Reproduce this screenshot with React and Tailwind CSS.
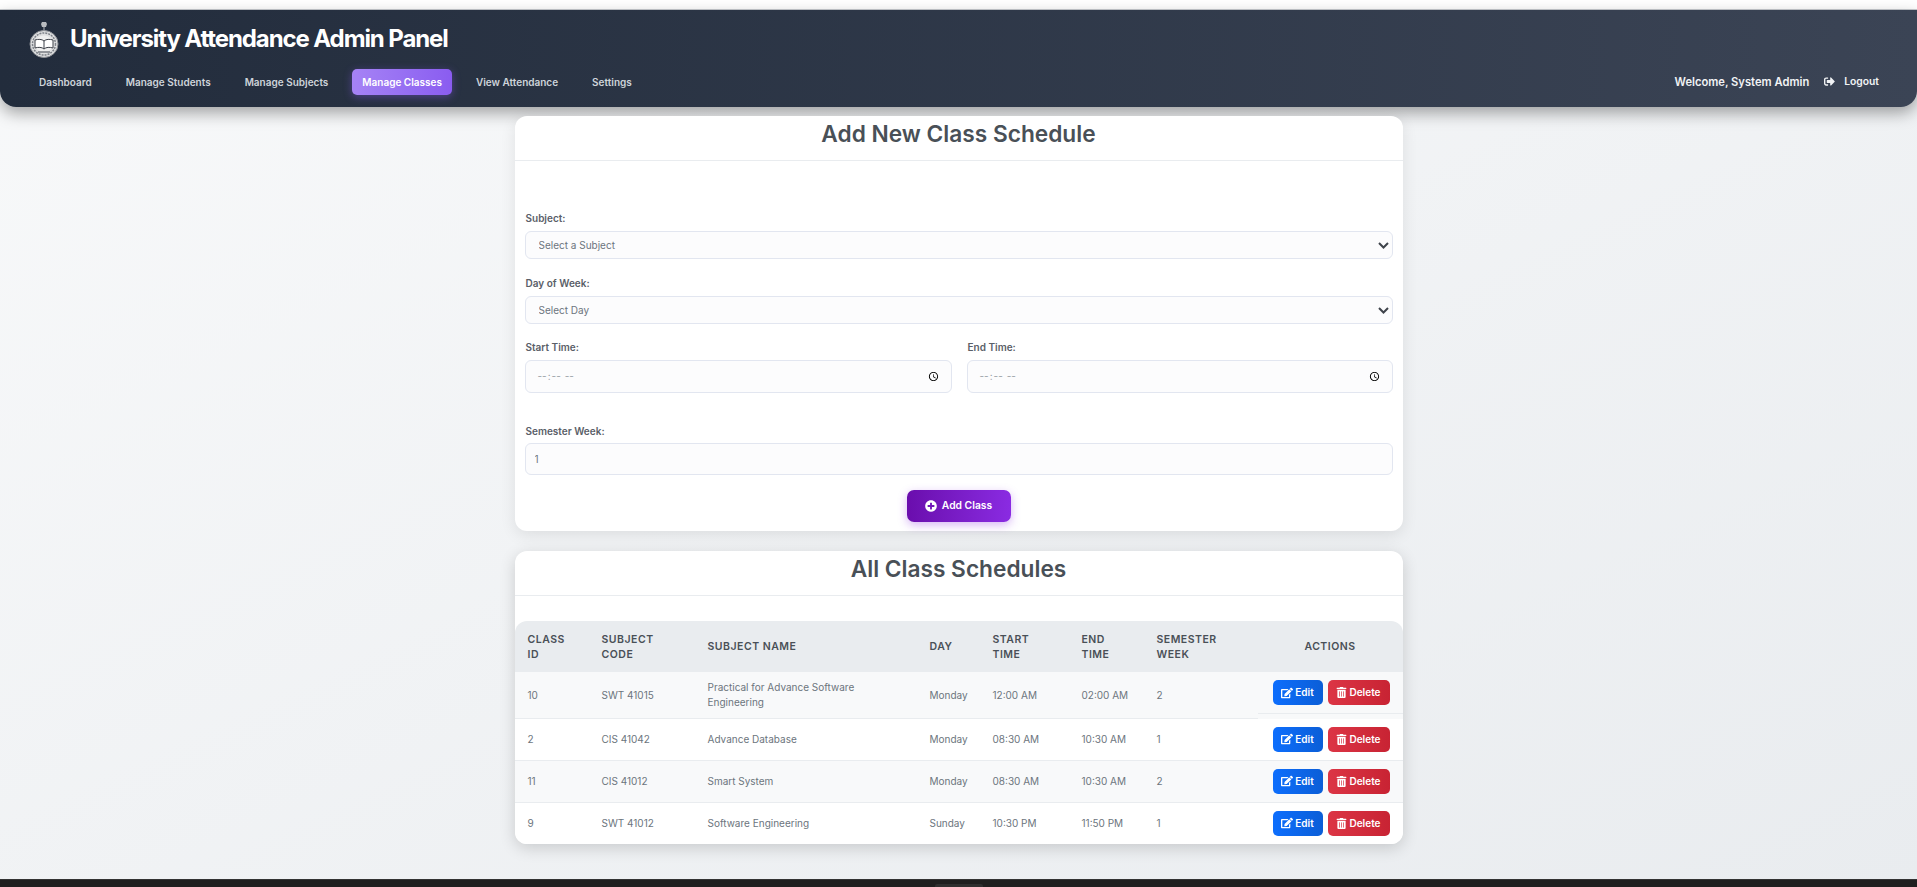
import { FaSignOutAlt, FaPlusCircle, FaEdit, FaTrashAlt } from "react-icons/fa";

const navItems = ["Dashboard", "Manage Students", "Manage Subjects", "Manage Classes", "View Attendance", "Settings"];

const rows = [
  { id: 10, code: "SWT 41015", name: "Practical for Advance Software Engineering", day: "Monday", start: "12:00 AM", end: "02:00 AM", week: 2 },
  { id: 2, code: "CIS 41042", name: "Advance Database", day: "Monday", start: "08:30 AM", end: "10:30 AM", week: 1 },
  { id: 11, code: "CIS 41012", name: "Smart System", day: "Monday", start: "08:30 AM", end: "10:30 AM", week: 2 },
  { id: 9, code: "SWT 41012", name: "Software Engineering", day: "Sunday", start: "10:30 PM", end: "11:50 PM", week: 1 },
];

const fieldClass =
  "block w-full rounded-[6px] border border-[#e2e6f0] bg-[#fcfcfd] text-[10px] text-[#6c757d] outline-none";
const labelClass = "block pl-[1px] text-[10px] leading-[14px] font-semibold text-[#5a6068]";
const thClass = "px-[13px] text-[10.5px] leading-[15px] font-semibold tracking-[0.5px] text-[#495057] uppercase";
const tdClass = "px-[13px] py-[8px] text-[10px] leading-[15px] text-[#6c757d] border-b border-[#e9ecef]";

function Logo() {
  return (
    <svg width="30" height="37" viewBox="0 0 30 37" className="shrink-0">
      <path d="M13 1h4l1 2-1 3h-4l-1-3z" fill="#b9bcc0" />
      <path d="M15 5v5" stroke="#b9bcc0" strokeWidth="1" />
      <ellipse cx="15" cy="23" rx="14" ry="13.5" fill="#dfe0e1" stroke="#8d9096" strokeWidth="1" />
      <ellipse cx="15" cy="23" rx="11.5" ry="11" fill="none" stroke="#7d8188" strokeWidth="1.5" strokeDasharray="2 1" />
      <ellipse cx="15" cy="23" rx="9" ry="8.5" fill="#efefef" />
      <path d="M6 19c3-1 7-1 9 1 2-2 6-2 9-1v8c-3-1-7-1-9 1-2-2-6-2-9-1z" fill="#fff" stroke="#3c4048" strokeWidth="1" />
      <path d="M15 20v8" stroke="#3c4048" strokeWidth="1" />
      <path d="M9 31h12" stroke="#777b82" strokeWidth="1.5" />
    </svg>
  );
}

function Header() {
  return (
    <header className="h-[97px] shrink-0 rounded-b-[16px] bg-gradient-to-r from-[#222c3c] to-[#3b4455] pl-[29px] pr-[38px] shadow-[0_6px_16px_rgba(0,0,0,0.35)]">
      <div className="flex h-[49px] items-center gap-[11px] pt-[9px]">
        <Logo />
        <h1 className="text-[24px] leading-[30px] font-bold tracking-[-1.1px] text-white">University Attendance Admin Panel</h1>
      </div>
      <div className="flex items-center justify-between pt-[10px]">
        <nav className="flex gap-[14px]">
          {navItems.map((item) =>
            item === "Manage Classes" ? (
              <a key={item} href="#" className="flex h-[26px] items-center rounded-[5px] bg-gradient-to-r from-[#a683f5] to-[#8a5cf0] px-[10px] text-[10px] font-semibold text-white shadow-[0_2px_8px_rgba(139,92,246,0.4)]">
                {item}
              </a>
            ) : (
              <a key={item} href="#" className="flex h-[26px] items-center px-[10px] text-[10px] font-semibold text-[#ced4da]">
                {item}
              </a>
            )
          )}
        </nav>
        <div className="flex items-center">
          <span className="text-[11.2px] font-semibold text-[#f1f3f5]">Welcome, System Admin</span>
          <a href="#" className="ml-[15px] flex items-center gap-[9px] text-[10.3px] font-semibold text-[#f1f3f5]">
            <FaSignOutAlt className="text-[11px]" />
            Logout
          </a>
        </div>
      </div>
    </header>
  );
}

function CardTitle({ children }) {
  return (
    <div className="h-[45px] border-b border-[#e9ecef] text-center">
      <h2 className="text-[22.7px] leading-[36px] font-semibold text-[#495057]">{children}</h2>
    </div>
  );
}

function SelectField({ label }) {
  return (
    <div className="relative mt-[6px]">
      <select className={`${fieldClass} h-[28px] appearance-none pl-[13px]`}>
        <option>{label}</option>
      </select>
      <svg width="11" height="7" viewBox="0 0 11 7" className="absolute right-[4px] top-[11px]">
        <path d="M1 1l4.5 4.5L10 1" fill="none" stroke="#3f444b" strokeWidth="2" />
      </svg>
    </div>
  );
}

function AddClassForm() {
  return (
    <section className="h-[415px] rounded-[12px] bg-white shadow-[0_4px_16px_rgba(0,0,0,0.09)]">
      <CardTitle>Add New Class Schedule</CardTitle>
      <form className="px-[10px] pt-[50px]">
        <label className={labelClass}>Subject:</label>
        <SelectField label="Select a Subject" />
        <label className={`${labelClass} mt-[17px]`}>Day of Week:</label>
        <SelectField label="Select Day" />
        <div className="mt-[16px] flex gap-[15px]">
          <div className="w-[427px]">
            <label className={labelClass}>Start Time:</label>
            <input type="time" className={`${fieldClass} mt-[6px] h-[33px] pl-[11px] pr-[9px] text-[#9aa0a6]`} />
          </div>
          <div className="flex-1">
            <label className={labelClass}>End Time:</label>
            <input type="time" className={`${fieldClass} mt-[6px] h-[33px] pl-[11px] pr-[9px] text-[#9aa0a6]`} />
          </div>
        </div>
        <label className={`${labelClass} mt-[31px]`}>Semester Week:</label>
        <input type="number" defaultValue="1" className={`${fieldClass} mt-[5px] h-[32px] px-[9px]`} />
        <div className="mt-[15px] flex justify-center">
          <button type="button" className="flex h-[32px] w-[104px] items-center justify-center gap-[5px] rounded-[7px] bg-gradient-to-r from-[#6a0dad] to-[#8a2be2] text-[10.3px] font-semibold text-white shadow-[0_3px_10px_rgba(138,43,226,0.35)]">
            <FaPlusCircle className="text-[12px]" />
            Add Class
          </button>
        </div>
      </form>
    </section>
  );
}

function ClassTable() {
  return (
    <section className="h-[293px] rounded-[12px] bg-white shadow-[0_4px_16px_rgba(0,0,0,0.16)]">
      <CardTitle>All Class Schedules</CardTitle>
      <div className="mt-[25px] h-[223px] overflow-hidden rounded-[12px]">
        <table className="w-full table-fixed border-collapse">
          <colgroup>
            <col className="w-[74px]" />
            <col className="w-[106px]" />
            <col className="w-[222px]" />
            <col className="w-[63px]" />
            <col className="w-[89px]" />
            <col className="w-[75px]" />
            <col className="w-[114px]" />
            <col className="w-[145px]" />
          </colgroup>
          <thead>
            <tr className="h-[51px] bg-[#e9ecef]">
              <th className={`${thClass} text-left`}>Class ID</th>
              <th className={`${thClass} text-left`}>Subject Code</th>
              <th className={`${thClass} text-left`}>Subject Name</th>
              <th className={`${thClass} text-left`}>Day</th>
              <th className={`${thClass} text-left`}>Start Time</th>
              <th className={`${thClass} text-left`}>End Time</th>
              <th className={`${thClass} text-left`}>Semester Week</th>
              <th className={`${thClass} text-center`}>Actions</th>
            </tr>
          </thead>
          <tbody>
            {rows.map((row, i) => (
              <tr key={row.id} className={i % 2 === 0 ? "bg-[#f8f9fa]" : "bg-white"}>
                <td className={tdClass}>{row.id}</td>
                <td className={tdClass}>{row.code}</td>
                <td className={tdClass}>{row.name}</td>
                <td className={tdClass}>{row.day}</td>
                <td className={tdClass}>{row.start}</td>
                <td className={tdClass}>{row.end}</td>
                <td className={tdClass}>{row.week}</td>
                <td className="flex justify-end gap-[5px] border-b border-[#e9ecef] bg-transparent py-[8px] pr-[13px]">
                  <button type="button" className="flex h-[25px] w-[50px] items-center justify-center gap-[2px] rounded-[5px] bg-gradient-to-r from-[#0d6efd] to-[#0b5ed7] text-[10px] font-semibold text-white">
                    <FaEdit className="text-[12px]" />
                    Edit
                  </button>
                  <button type="button" className="flex h-[25px] w-[62px] items-center justify-center gap-[2px] rounded-[5px] bg-gradient-to-r from-[#dc3545] to-[#c82333] text-[10px] font-semibold text-white">
                    <FaTrashAlt className="text-[11px]" />
                    Delete
                  </button>
                </td>
              </tr>
            ))}
          </tbody>
        </table>
      </div>
    </section>
  );
}

export default function App() {
  return (
    <div className="flex h-[887px] flex-col overflow-hidden bg-gradient-to-br from-[#f8f9fa] to-[#e9ecef] font-['Inter',sans-serif]">
      <div className="h-[10px] shrink-0 border-b border-[#c9ccd0] bg-white" />
      <Header />
      <main className="mx-auto flex w-[888px] flex-1 flex-col gap-[20px] pt-[9px]">
        <AddClassForm />
        <ClassTable />
      </main>
      <footer className="flex h-[8px] shrink-0 justify-center border-t border-[#333] bg-[#1f1f1f] pt-[4px]">
        <div className="h-[4px] w-[48px] rounded-t-[2px] bg-[#2f2f2f]" />
      </footer>
    </div>
  );
}
